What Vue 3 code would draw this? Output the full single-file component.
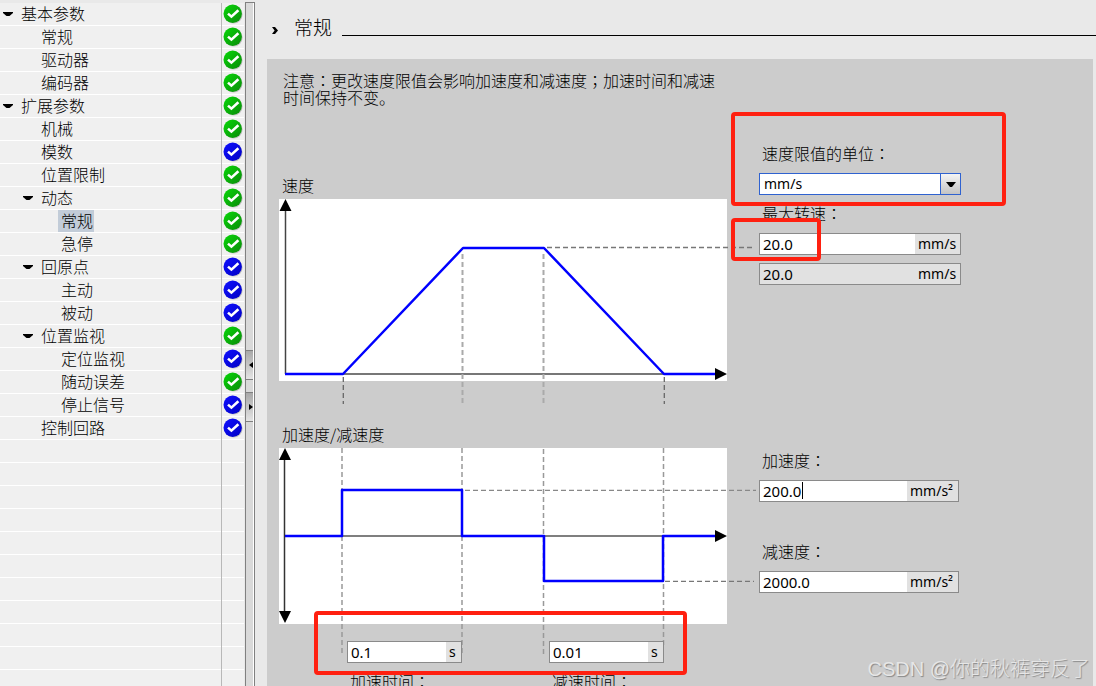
<script setup>
import { ref } from 'vue'

const tree = [
  { text: '基本参数', depth: 0, open: true, status: 'ok' },
  { text: '常规', depth: 1, status: 'ok' },
  { text: '驱动器', depth: 1, status: 'ok' },
  { text: '编码器', depth: 1, status: 'ok' },
  { text: '扩展参数', depth: 0, open: true, status: 'ok' },
  { text: '机械', depth: 1, status: 'ok' },
  { text: '模数', depth: 1, status: 'default' },
  { text: '位置限制', depth: 1, status: 'ok' },
  { text: '动态', depth: 1, open: true, status: 'ok' },
  { text: '常规', depth: 2, status: 'ok', selected: true },
  { text: '急停', depth: 2, status: 'ok' },
  { text: '回原点', depth: 1, open: true, status: 'default' },
  { text: '主动', depth: 2, status: 'default' },
  { text: '被动', depth: 2, status: 'default' },
  { text: '位置监视', depth: 1, open: true, status: 'ok' },
  { text: '定位监视', depth: 2, status: 'default' },
  { text: '随动误差', depth: 2, status: 'ok' },
  { text: '停止信号', depth: 2, status: 'default' },
  { text: '控制回路', depth: 1, status: 'default' }
]
const emptyRows = 12

const unit = ref('mm/s')
const maxSpeed = ref('20.0')
const maxSpeedResult = ref('20.0')
const accel = ref('200.0')
const decel = ref('2000.0')
const accelTime = ref('0.1')
const decelTime = ref('0.01')
</script>

<template>
  <div class="app">
    <nav class="tree">
      <ul>
        <li v-for="(item, i) in tree" :key="i" class="row">
          <div class="name" :class="'depth-' + item.depth">
            <span class="toggle">
              <svg v-if="item.open" width="10" height="5" viewBox="0 0 10 5"><path d="M0 0H10V1L6.5 4H3.5L0 1Z" /></svg>
            </span>
            <button type="button" class="node" :class="{ selected: item.selected }">{{ item.text }}</button>
          </div>
          <div class="status">
            <svg width="20" height="20" viewBox="0 0 20 20">
              <defs>
                <linearGradient :id="'disc' + i" x1="0" y1="0" x2="1" y2="1">
                  <stop offset="0" :stop-color="item.status === 'ok' ? '#08d808' : '#1010ff'" />
                  <stop offset="1" :stop-color="item.status === 'ok' ? '#0a8a0a' : '#0000c4'" />
                </linearGradient>
              </defs>
              <circle cx="10.6" cy="10.6" r="9" fill="#000" opacity=".2" />
              <circle cx="9.7" cy="9.7" r="9.2" :fill="'url(#disc' + i + ')'" />
              <path d="M5 9.6L8.4 12.6L15.4 6.2" fill="none" stroke="#fff" stroke-width="2.6" />
            </svg>
          </div>
        </li>
        <li v-for="n in emptyRows" :key="'e' + n" class="row">
          <div class="name"></div>
          <div class="status"></div>
        </li>
      </ul>
    </nav>

    <div class="splitter">
      <button type="button" class="handle" aria-label="收起">
        <svg width="4" height="6" viewBox="0 0 4 6"><path d="M4 0V6L0 3Z" /></svg>
      </button>
      <button type="button" class="handle" aria-label="展开">
        <svg width="4" height="6" viewBox="0 0 4 6"><path d="M0 0V6L4 3Z" /></svg>
      </button>
    </div>

    <main>
      <header>
        <svg class="chevron" width="6" height="7" viewBox="0 0 6 7"><path d="M0 0H3L6 3.5L3 7H0L2.6 3.5Z" /></svg>
        <h1>常规</h1>
        <div class="rule"></div>
      </header>

      <section class="panel">
        <div class="charts">
          <p class="note">注意<span class="punct">：</span>更改速度限值会影响加速度和减速度<span class="punct">；</span>加速时间和减速时间保持不变。</p>

          <h2 class="caption first">速度</h2>
          <svg class="chart" width="448" height="182" viewBox="0 0 448 182">
            <rect width="448" height="182" fill="#fff" />
            <g fill="none">
              <path d="M6.5 10V175" stroke="#444" stroke-width="1.5" />
              <path d="M64 175H438" stroke="#777" stroke-width="2" />
              <g stroke="#aaa" stroke-width="2" stroke-dasharray="5 3">
                <path d="M183.5 55V205" />
                <path d="M264.5 55V205" />
              </g>
              <g stroke="#666" stroke-width="1.3" stroke-dasharray="5 3">
                <path d="M64.3 178V205" />
                <path d="M385.3 178V205" />
              </g>
              <path d="M268 48.5H475" stroke="#777" stroke-width="1.3" stroke-dasharray="5 3" />
              <path d="M6 175H64L184 49H265L385 175H438" stroke="#0000ff" stroke-width="2.5" stroke-linejoin="round" />
            </g>
            <path d="M6.5 0L12.5 12H0.5ZM448 175L436 169V181Z" />
          </svg>

          <h2 class="caption">加速度/减速度</h2>
          <svg class="chart" width="448" height="176" viewBox="0 0 448 176">
            <rect width="448" height="176" fill="#fff" />
            <g fill="none">
              <path d="M5.5 10V166" stroke="#333" stroke-width="1.5" />
              <path d="M63 88H438" stroke="#555" stroke-width="1.5" />
              <g stroke="#999" stroke-width="1.5" stroke-dasharray="5 3">
                <path d="M63 0V206" />
                <path d="M183 0V206" />
                <path d="M264.5 1V207" />
                <path d="M384.5 0V198" />
              </g>
              <path d="M186 42.3H477" stroke="#888" stroke-width="1.3" stroke-dasharray="5 3" />
              <path d="M386 133.3H475" stroke="#777" stroke-width="1.3" stroke-dasharray="5 3" />
              <path d="M6 88H63V42H183V88H265V133H384V88H438" stroke="#0000ff" stroke-width="2.5" stroke-linejoin="round" />
            </g>
            <path d="M6 0L12 12H0ZM6 175L12 163H0ZM448 88L436 82V94Z" />
          </svg>

          <div class="times">
            <div class="time">
              <div class="field">
                <input id="accel-time" v-model="accelTime" type="text">
                <span class="unit seconds">s</span>
              </div>
              <label for="accel-time">加速时间<span class="punct">：</span></label>
            </div>
            <div class="time">
              <div class="field">
                <input id="decel-time" v-model="decelTime" type="text">
                <span class="unit seconds">s</span>
              </div>
              <label for="decel-time">减速时间<span class="punct">：</span></label>
            </div>
          </div>
        </div>

        <div class="settings">
          <label for="unit">速度限值的单位<span class="punct">：</span></label>
          <div class="field select">
            <select id="unit" v-model="unit">
              <option>mm/s</option>
            </select>
            <span class="arrow"><svg width="10" height="5" viewBox="0 0 10 5"><path d="M0 0H10L6 5H4L0 0Z" /></svg></span>
          </div>

          <label for="max-speed" class="near">最大转速<span class="punct">：</span></label>
          <div class="field">
            <input id="max-speed" v-model="maxSpeed" type="text">
            <span class="unit speed">mm/s</span>
          </div>
          <div class="field readonly">
            <input v-model="maxSpeedResult" type="text" readonly aria-label="最大转速">
            <span class="unit speed">mm/s</span>
          </div>

          <label for="accel" class="accel-label">加速度<span class="punct">：</span></label>
          <div class="field narrow">
            <input id="accel" v-model="accel" type="text">
            <span class="caret"></span>
            <span class="unit rate">mm/s²</span>
          </div>

          <label for="decel" class="decel-label">减速度<span class="punct">：</span></label>
          <div class="field narrow">
            <input id="decel" v-model="decel" type="text">
            <span class="unit rate">mm/s²</span>
          </div>
        </div>

        <div class="mark mark-unit"></div>
        <div class="mark mark-speed"></div>
        <div class="mark mark-times"></div>
      </section>
    </main>

    <div class="watermark">CSDN @你的秋裤穿反了</div>
  </div>
</template>

<style>
body {
  margin: 0;
  background: #e9e9e9;
}
</style>

<style scoped>
.app {
  position: relative;
  display: flex;
  height: 100vh;
  overflow: hidden;
  box-sizing: border-box;
  background: #e9e9e9;
  color: #000;
  font-family: "Noto Sans CJK SC", sans-serif;
  font-size: 16px;
  font-weight: 300;
}
.punct {
  font-family: "Noto Sans CJK TC", sans-serif;
}
button {
  font: inherit;
  color: inherit;
  border: 0;
  margin: 0;
  background: none;
}

.tree {
  flex: none;
  width: 244px;
  padding-top: 3px;
}
.tree ul {
  list-style: none;
  margin: 0;
  padding: 0;
}
.row {
  display: flex;
  height: 23px;
}
.name,
.status {
  box-sizing: border-box;
  background: #f0f0f0;
  border-bottom: 1px solid #fff;
}
.name {
  flex: 1;
  display: flex;
  align-items: stretch;
}
.depth-1 {
  padding-left: 20px;
}
.depth-2 {
  padding-left: 40px;
}
.toggle {
  display: flex;
  align-items: center;
  width: 15px;
  padding-left: 3px;
}
.node {
  padding: 0 1px 2px 3px;
  line-height: 20px;
}
.node.selected {
  background: #c2ccd8;
}
.status {
  width: 22px;
  margin-left: 1px;
  padding: 1px 0 0 1px;
  box-shadow: -1px 0 #b8b8b8;
}
.status svg {
  display: block;
}

.splitter {
  flex: none;
  display: flex;
  flex-direction: column;
  gap: 12px;
  box-sizing: border-box;
  width: 10px;
  margin: 2px 0 0 1px;
  padding-top: 347px;
  border: 1px solid #808080;
  border-bottom: 0;
  background: #d9d9d9;
  box-shadow: inset -1px 0 #fff;
}
.handle {
  display: flex;
  align-items: center;
  justify-content: flex-end;
  box-sizing: border-box;
  height: 30px;
  padding: 0;
  margin-right: 1px;
  border-top: 1px solid #808080;
  border-bottom: 1px solid #808080;
  background: linear-gradient(#a8a8a8, #e4e4e4);
}

main {
  flex: 1;
  display: flex;
  flex-direction: column;
  min-width: 0;
}
header {
  flex: none;
  display: flex;
  height: 59px;
}
.chevron {
  margin: 27px 0 0 17px;
}
h1 {
  margin: 14px 10px 0 16px;
  font-size: 19px;
  font-weight: 300;
  line-height: 26px;
}
.rule {
  flex: 1;
  height: 1px;
  margin-top: 35px;
  background: #000;
}

.panel {
  position: relative;
  flex: 1;
  display: flex;
  align-items: flex-start;
  gap: 32px;
  min-height: 0;
  margin: 0 3px 0 12px;
  padding-left: 12px;
  background: #ccc;
}
.charts {
  flex: none;
  width: 448px;
  padding-top: 13px;
}
.note {
  width: 436px;
  margin: 0;
  padding-left: 4px;
  line-height: 17px;
}
.caption {
  margin: 44px 0 5px 3px;
  font-size: 16px;
  font-weight: 300;
  line-height: 18px;
}
.caption.first {
  margin-top: 70px;
}
.chart {
  display: block;
  overflow: visible;
}
.times {
  display: flex;
  gap: 87px;
  padding: 17px 0 0 68px;
}
.time {
  position: relative;
  width: 115px;
}
.time label {
  margin-top: 9px;
}

label {
  display: block;
  padding-left: 3px;
  line-height: 18px;
  white-space: nowrap;
}
.settings {
  flex: 1;
  min-width: 0;
  padding-top: 85px;
}
.settings label {
  margin-bottom: 11px;
}
.settings .near {
  margin-top: 9px;
}
.settings .accel-label {
  margin-top: 166px;
}
.settings .decel-label {
  margin-top: 40px;
}

.field {
  position: relative;
  display: flex;
  box-sizing: border-box;
  height: 22px;
  border: 1px solid #8a8a8a;
  background: #fff;
  font-family: "Noto Sans", sans-serif;
  font-weight: 400;
}
.settings .field {
  max-width: 202px;
}
.settings .field.narrow {
  max-width: 200px;
}
.field input,
.field select {
  flex: 1;
  width: 0;
  min-width: 0;
  margin: 0;
  padding: 0 0 1px 3px;
  border: 0;
  outline: 0;
  background: transparent;
  color: #000;
  font-family: inherit;
  font-size: 15px;
}
.field select {
  appearance: none;
  padding-left: 4px;
  font-size: 14px;
}
.field.select {
  border-color: #2f62d0;
}
.arrow {
  display: flex;
  align-items: center;
  justify-content: center;
  width: 19px;
  border-left: 1px solid #2f62d0;
  background: linear-gradient(#f4f4f4, #c4c4c4);
  pointer-events: none;
}
.unit {
  box-sizing: border-box;
  padding-left: 3px;
  background: #e1e1e1;
  font-size: 14px;
  line-height: 20px;
}
.speed {
  width: 45px;
}
.rate {
  width: 51px;
}
.seconds {
  width: 15px;
}
.readonly {
  margin-top: 8px;
  background: #e1e1e1;
}
.caret {
  position: absolute;
  left: 42px;
  top: 1px;
  width: 1px;
  height: 17px;
  background: #000;
}

.mark {
  position: absolute;
  box-sizing: border-box;
  border: 4px solid #ff2010;
  border-radius: 4px;
  pointer-events: none;
}
.mark-unit {
  left: 464px;
  top: 53px;
  width: 275px;
  height: 94px;
}
.mark-speed {
  left: 464px;
  top: 159px;
  width: 90px;
  height: 43px;
}
.mark-times {
  left: 47px;
  top: 552px;
  width: 373px;
  height: 64px;
}

.watermark {
  position: absolute;
  right: 6px;
  bottom: 2px;
  color: #e6e6e6;
  font-family: "Liberation Sans", "Noto Sans CJK SC", sans-serif;
  font-size: 20px;
  line-height: 30px;
  text-shadow: 1px 1px 1px #888;
}
</style>
